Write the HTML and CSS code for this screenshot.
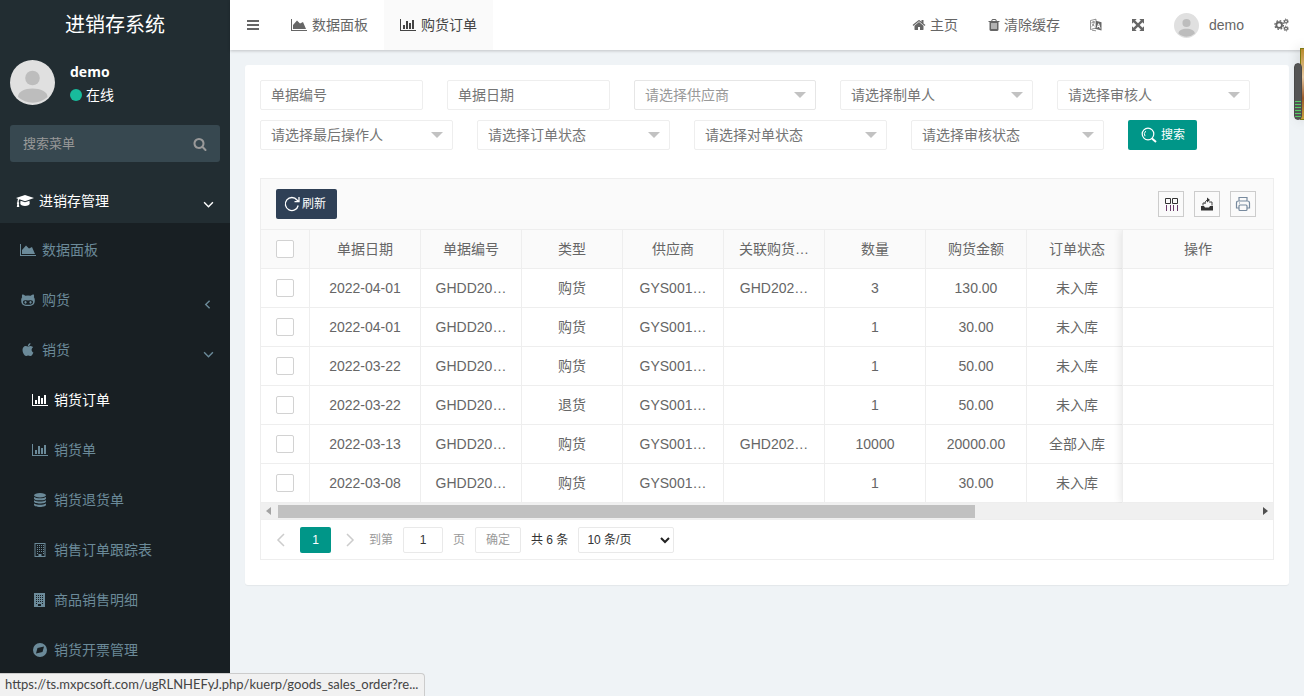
FILE: index.html
```html
<!DOCTYPE html>
<html lang="zh-CN">
<head>
  <meta charset="UTF-8">
  <meta name="viewport" content="width=device-width, initial-scale=1.0">
  <title>进销存系统</title>
  <link rel="stylesheet" href="styles.css">
</head>
<body>
  <!-- Icon sprite -->
  <svg class="sprite" aria-hidden="true">
    <symbol id="i-bars" viewBox="0 0 14 14"><path d="M1 2h12v2H1zM1 6h12v2H1zM1 10h12v2H1z"/></symbol>
    <symbol id="i-area" viewBox="0 0 16 14"><path d="M0 1h1v11h15v1H0zM2 11V7l4-4.500 3 3 3-1.500 3 7z"/></symbol>
    <symbol id="i-bar" viewBox="0 0 16 14"><path d="M0 1h1v11h15v1H0zM3 7h2v4H3zM6 3h2v8H6zM9 5h2v6H9zM12 2h2v9h-2z"/></symbol>
    <symbol id="i-home" viewBox="0 0 1792 1792"><path d="M1472 992v480q0 26-19 45t-45 19h-384v-384h-256v384h-384q-26 0-45-19t-19-45v-480q0-1 .5-3t.5-3l575-474 575 474q1 2 1 6zm223-69l-62 74q-8 9-21 11h-3q-13 0-21-7l-692-577-692 577q-12 8-24 7-13-2-21-11l-62-74q-8-10-7-23.500t11-21.500l719-599q32-26 76-26t76 26l244 204v-195q0-14 9-23t23-9h192q14 0 23 9t9 23v408l219 182q10 8 11 21.500t-7 23.500z"/></symbol>
    <symbol id="i-trash" viewBox="192 0 1408 1792"><path d="M704 1376v-704q0-14-9-23t-23-9h-64q-14 0-23 9t-9 23v704q0 14 9 23t23 9h64q14 0 23-9t9-23zm256 0v-704q0-14-9-23t-23-9h-64q-14 0-23 9t-9 23v704q0 14 9 23t23 9h64q14 0 23-9t9-23zm256 0v-704q0-14-9-23t-23-9h-64q-14 0-23 9t-9 23v704q0 14 9 23t23 9h64q14 0 23-9t9-23zm-544-992h448l-48-117q-7-9-17-11h-317q-10 2-17 11zm928 32v64q0 14-9 23t-23 9h-96v948q0 83-47 143.500t-113 60.500h-832q-66 0-113-58.500t-47-141.500v-952h-96q-14 0-23-9t-9-23v-64q0-14 9-23t23-9h309l70-167q15-37 54-63t79-26h320q40 0 79 26t54 63l70 167h309q14 0 23 9t9 23z"/></symbol>
    <symbol id="i-search" viewBox="0 0 1792 1792"><path d="M1216 832q0-185-131.500-316.500t-316.500-131.500-316.500 131.500-131.500 316.500 131.500 316.500 316.500 131.500 316.500-131.500 131.500-316.500zm512 832q0 52-38 90t-90 38q-54 0-90-38l-343-342q-179 124-399 124-143 0-273.500-55.500t-225-150-150-225-55.500-273.500 55.500-273.500 150-225 225-150 273.500-55.500 273.500 55.500 225 150 150 225 55.500 273.500q0 220-124 399l343 343q37 37 37 90z"/></symbol>
    <symbol id="i-apple" viewBox="0 0 1792 1792"><path d="M1585 1215q-39 125-123 250-129 196-257 196-49 0-140-32-86-32-151-32-61 0-142 33-81 34-132 34-152 0-301-259-147-261-147-503 0-228 113-374 113-144 284-144 72 0 177 30 104 30 138 30 45 0 143-34 102-34 173-34 119 0 213 65 52 36 104 100-79 67-114 118-65 94-65 207 0 124 69 223t158 126zm-376-1173q0 61-29 136-30 75-93 138-54 54-108 72-37 11-104 17 3-149 78-257 74-107 250-148 1 3 2.500 11t2.500 11q0 4 .5 10t.5 10z"/></symbol>
    <symbol id="i-github" viewBox="0 0 14 14"><path fill-rule="evenodd" d="M1.200 1.500c1 0 2.300.5 3.100 1.200a13 13 0 0 1 5.400 0c.8-.7 2.100-1.200 3.100-1.200.4 1 .4 2 .1 2.800.8 1 .9 2 .9 3.200 0 4-2 5.500-6.800 5.500S.2 11.500.2 7.500c0-1.200.1-2.200.9-3.200-.3-.8-.3-1.800.1-2.800zM4 7.300C2.600 7.300 2 8 2 9.200c0 2 1.700 2.600 5 2.600s5-.6 5-2.600c0-1.200-.6-1.900-2-1.900-1 0-1.800.2-3 .2s-2-.2-3-.2z"/><ellipse cx="4.500" cy="9.300" rx="1" ry="1.400"/><ellipse cx="9.500" cy="9.300" rx="1" ry="1.400"/></symbol>
    <symbol id="i-cap" viewBox="0 0 18 14"><path d="M9 1l9 3-9 3.200L3.500 5.300C2.800 6 2.700 7 2.700 8.200c.7.500.7 1.200.1 1.700l.5 3.100H.8l.5-3.100c-.6-.5-.6-1.200.1-1.700 0-1.400.2-2.600.8-3.300L0 4zM4.500 6.700L9 8.300l4.500-1.600.2 3c0 1.100-2 2.300-4.700 2.300s-4.700-1.200-4.700-2.300z"/></symbol>
    <symbol id="i-db" viewBox="0 0 14 14"><ellipse cx="7" cy="2.200" rx="6" ry="2.200"/><path d="M1 4c2.500 1.800 9.500 1.800 12 0v1.400c0 2.600-12 2.600-12 0zM1 7.200c2.500 1.800 9.500 1.800 12 0v1.400c0 2.600-12 2.600-12 0zM1 10.400c2.500 1.800 9.500 1.800 12 0v1.400c0 2.900-12 2.900-12 0z"/></symbol>
    <symbol id="i-building-o" viewBox="0 0 14 14"><path fill-rule="evenodd" d="M1.500 0h11v14h-11zM2.500 1v12h3v-2h3v2h3V1z"/><path d="M4 2h1v1H4zM6 2h1v1H6zM8 2h1v1H8zM10 2h1v1h-1zM4 4h1v1H4zM6 4h1v1H6zM8 4h1v1H8zM10 4h1v1h-1zM4 6h1v1H4zM6 6h1v1H6zM8 6h1v1H8zM10 6h1v1h-1zM4 8h1v1H4zM6 8h1v1H6zM8 8h1v1H8zM10 8h1v1h-1zM4 10h1v1H4zM10 10h1v1h-1z"/></symbol>
    <symbol id="i-building" viewBox="0 0 14 14"><path fill-rule="evenodd" d="M1 0h11v14H1zM3 2v1h1V2zM5 2v1h1V2zM7 2v1h1V2zM9 2v1h1V2zM3 4v1h1V4zM5 4v1h1V4zM7 4v1h1V4zM9 4v1h1V4zM3 6v1h1V6zM5 6v1h1V6zM7 6v1h1V6zM9 6v1h1V6zM3 8v1h1V8zM5 8v1h1V8zM7 8v1h1V8zM9 8v1h1V8zM3 10v1h1v-1zM9 10v1h1v-1zM5 11v2h3v-2z"/></symbol>
    <symbol id="i-compass" viewBox="0 0 14 14"><path fill-rule="evenodd" d="M7 0a7 7 0 1 0 0 14A7 7 0 0 0 7 0zM11 3.500L9.500 9 3 10.500 4.500 5z"/></symbol>
    <symbol id="i-down" viewBox="0 0 10 10"><path d="M1 3l4 4 4-4" fill="none" stroke="currentColor" stroke-width="1.300"/></symbol>
    <symbol id="i-left" viewBox="0 0 10 10"><path d="M6 1.500L2.500 5 6 8.500" fill="none" stroke="currentColor" stroke-width="1.300"/></symbol>
    <symbol id="i-lang" viewBox="1 1 12 12"><path d="M6 2.500l6.500 1.700v8.300L6 10.700z"/><path d="M1.500 2.500L7 1.200v8.800l-5.500 1.500z" fill="#fff" stroke="currentColor" stroke-width=".7"/><path d="M2.500 4.500L6 3.700M4.200 3v1.400M5.200 4C5 6 4 7.800 2.500 8.800M3 5.500c.6 1.300 1.500 2 2.500 2.600M3 12.200l4 .6" fill="none" stroke="currentColor" stroke-width=".7"/><path d="M8.200 9.700l1.400-4 1.600 4.800M8.800 8.300l1.800.5" fill="none" stroke="#fff"/></symbol>
    <symbol id="i-expand" viewBox="1 1 12 12"><path d="M1 1h4.700L4.200 2.500 7 5.300l2.800-2.800L8.300 1H13v4.700l-1.500-1.500L8.700 7l2.800 2.800L13 8.300V13H8.300l1.500-1.500L7 8.700l-2.800 2.800L5.700 13H1V8.300l1.500 1.500L5.300 7 2.500 4.200 1 5.700z"/></symbol>
    <symbol id="i-cogs" viewBox="0 0 16 14"><g fill="none" stroke="currentColor"><circle cx="5.500" cy="7" r="3" stroke-width="2"/><circle cx="5.500" cy="7" r="4.600" stroke-width="1.300" stroke-dasharray="1.800 1.813"/><circle cx="12.800" cy="3.200" r="1.600" stroke-width="1.300"/><circle cx="12.800" cy="3.200" r="2.600" stroke-dasharray="1.100 1.620"/><circle cx="12.800" cy="10.800" r="1.600" stroke-width="1.300"/><circle cx="12.800" cy="10.800" r="2.600" stroke-dasharray="1.100 1.620"/></g></symbol>
    <symbol id="i-avatar" viewBox="0 0 45 45"><circle cx="22.500" cy="22.500" r="22.500" fill="#e0e0e0"/><circle cx="22.500" cy="18" r="7.300" fill="#bdbdbd"/><path d="M8 37c0-5.500 6.500-8.500 14.500-8.500S37.500 31.500 37.500 37a22 22 0 0 1-29.500 0z" fill="#bdbdbd"/></symbol>
    <symbol id="i-refresh" viewBox="0 0 16 16"><path d="M14.200 9.500A6.500 6.500 0 1 1 13 4l1.500 1.500M15 1v4.700h-4.500" fill="none" stroke="currentColor" stroke-width="1.300"/></symbol>
    <symbol id="i-find" viewBox="0 0 16 16"><g fill="none" stroke="currentColor"><circle cx="7" cy="7" r="5.800" stroke-width="1.200"/><path d="M4 9.200a4 4 0 0 1 .7-5" /><path d="M11 11.500l4 3.500" stroke-width="2"/></g></symbol>
    <symbol id="i-cols" viewBox="0 0 16 16"><path d="M2.500 2.500h5v5h-5zM9.500 2.500h5v5h-5z" fill="none" stroke="#333"/><path d="M3 9h1v6H3zM7 9h1v6H7zM10 9h1v6h-1zM14 9h1v6h-1z" fill="#6b3a6b"/></symbol>
    <symbol id="i-export" viewBox="0 0 16 16"><path d="M2 10h3l1 1.500h4L11 10h3v4.500H2z" fill="#333"/><path d="M4 9.500V7h2M13 9.500V6h-3M6 8c.2-3 1.500-4 3-4" fill="none" stroke="#444"/><path d="M8 1.500L11 4 8 6.500z" fill="#333"/></symbol>
    <symbol id="i-print" viewBox="0 0 16 16"><g fill="none" stroke="#778a9e" stroke-width="1.200"><path d="M4 5V1.500h8V5M4 12H1.500V7c0-1.300.7-2 2-2h9c1.300 0 2 .7 2 2v5H12"/><rect x="4" y="9" width="8" height="5.500" rx="1"/><path d="M4 7h1"/></g></symbol>
    <symbol id="i-prev" viewBox="0 0 12 14"><path d="M9 1L3 7l6 6" fill="none" stroke="currentColor" stroke-width="1.500"/></symbol>
    <symbol id="i-next" viewBox="0 0 12 14"><path d="M3 1l6 6-6 6" fill="none" stroke="currentColor" stroke-width="1.500"/></symbol>
    <symbol id="i-check-down" viewBox="0 0 10 10"><path d="M1 3l4 4 4-4" fill="none" stroke="#222" stroke-width="2"/></symbol>
  </svg>

  <div class="wrapper">
    <!-- Sidebar -->
    <aside class="sidebar">
      <a class="logo" href="#">进销存系统</a>
      <div class="user-panel">
        <svg class="avatar"><use href="#i-avatar"/></svg>
        <div class="info">
          <p class="name">demo</p>
          <a class="status" href="#"><span class="dot"></span>在线</a>
        </div>
      </div>
      <form class="menu-search">
        <input type="text" placeholder="搜索菜单" aria-label="搜索菜单">
        <button type="button" aria-label="搜索"><svg class="icon"><use href="#i-search"/></svg></button>
      </form>
      <nav class="menu">
        <a class="root" href="#"><svg class="icon"><use href="#i-cap"/></svg>进销存管理<svg class="arrow"><use href="#i-down"/></svg></a>
        <div class="submenu">
          <a href="#"><svg class="icon"><use href="#i-area"/></svg>数据面板</a>
          <a href="#"><svg class="icon"><use href="#i-github"/></svg>购货<svg class="arrow"><use href="#i-left"/></svg></a>
          <a href="#"><svg class="icon"><use href="#i-apple"/></svg>销货<svg class="arrow"><use href="#i-down"/></svg></a>
          <a class="leaf active" href="#"><svg class="icon"><use href="#i-bar"/></svg>销货订单</a>
          <a class="leaf" href="#"><svg class="icon"><use href="#i-bar"/></svg>销货单</a>
          <a class="leaf" href="#"><svg class="icon"><use href="#i-db"/></svg>销货退货单</a>
          <a class="leaf" href="#"><svg class="icon"><use href="#i-building-o"/></svg>销售订单跟踪表</a>
          <a class="leaf" href="#"><svg class="icon"><use href="#i-building"/></svg>商品销售明细</a>
          <a class="leaf" href="#"><svg class="icon"><use href="#i-compass"/></svg>销货开票管理</a>
        </div>
      </nav>
    </aside>

    <div class="main">
      <!-- Top bar -->
      <header class="topbar">
        <a class="toggle" href="#" aria-label="菜单"><svg class="icon"><use href="#i-bars"/></svg></a>
        <a class="tab" href="#"><svg class="icon wide"><use href="#i-area"/></svg>数据面板</a>
        <a class="tab current" href="#"><svg class="icon wide"><use href="#i-bar"/></svg>购货订单</a>
        <div class="topbar-right">
          <a href="#"><svg class="icon"><use href="#i-home"/></svg>主页</a>
          <a href="#"><svg class="icon narrow"><use href="#i-trash"/></svg>清除缓存</a>
          <a href="#" aria-label="语言"><svg class="icon narrow"><use href="#i-lang"/></svg></a>
          <a href="#" aria-label="全屏"><svg class="icon narrow"><use href="#i-expand"/></svg></a>
          <a class="user" href="#"><svg class="avatar"><use href="#i-avatar"/></svg>demo</a>
          <a href="#" aria-label="设置"><svg class="icon cogs"><use href="#i-cogs"/></svg></a>
        </div>
      </header>

      <main class="content">
        <section class="panel">
          <!-- Filters -->
          <form class="filters">
            <input class="field" type="text" placeholder="单据编号" aria-label="单据编号">
            <input class="field" type="text" placeholder="单据日期" aria-label="单据日期">
            <div class="select supplier"><select aria-label="供应商"><option>请选择供应商</option></select></div>
            <div class="select"><select aria-label="制单人"><option>请选择制单人</option></select></div>
            <div class="select"><select aria-label="审核人"><option>请选择审核人</option></select></div>
            <div class="select"><select aria-label="最后操作人"><option>请选择最后操作人</option></select></div>
            <div class="select"><select aria-label="订单状态"><option>请选择订单状态</option></select></div>
            <div class="select"><select aria-label="对单状态"><option>请选择对单状态</option></select></div>
            <div class="select"><select aria-label="审核状态"><option>请选择审核状态</option></select></div>
            <button class="btn btn-search" type="button"><svg><use href="#i-find"/></svg>搜索</button>
          </form>

          <div class="grid-box">
            <div class="toolbar">
              <button class="btn btn-refresh" type="button"><svg><use href="#i-refresh"/></svg>刷新</button>
              <div class="tools">
                <button type="button" aria-label="筛选列"><svg><use href="#i-cols"/></svg></button>
                <button type="button" aria-label="导出"><svg><use href="#i-export"/></svg></button>
                <button type="button" aria-label="打印"><svg><use href="#i-print"/></svg></button>
              </div>
            </div>

            <div class="table-view">
              <table class="data">
                <colgroup><col class="c-check"><col class="c-date"><col><col><col><col><col><col><col><col><col><col></colgroup>
                <thead>
                  <tr><th><input type="checkbox" aria-label="全选"></th><th>单据日期</th><th>单据编号</th><th>类型</th><th>供应商</th><th>关联购货…</th><th>数量</th><th>购货金额</th><th>订单状态</th><th></th><th></th><th></th></tr>
                </thead>
                <tbody>
                  <tr><td><input type="checkbox" aria-label="选择"></td><td>2022-04-01</td><td>GHDD20…</td><td>购货</td><td>GYS001…</td><td>GHD202…</td><td>3</td><td>130.00</td><td>未入库</td><td></td><td></td><td></td></tr>
                  <tr><td><input type="checkbox" aria-label="选择"></td><td>2022-04-01</td><td>GHDD20…</td><td>购货</td><td>GYS001…</td><td></td><td>1</td><td>30.00</td><td>未入库</td><td></td><td></td><td></td></tr>
                  <tr><td><input type="checkbox" aria-label="选择"></td><td>2022-03-22</td><td>GHDD20…</td><td>购货</td><td>GYS001…</td><td></td><td>1</td><td>50.00</td><td>未入库</td><td></td><td></td><td></td></tr>
                  <tr><td><input type="checkbox" aria-label="选择"></td><td>2022-03-22</td><td>GHDD20…</td><td>退货</td><td>GYS001…</td><td></td><td>1</td><td>50.00</td><td>未入库</td><td></td><td></td><td></td></tr>
                  <tr><td><input type="checkbox" aria-label="选择"></td><td>2022-03-13</td><td>GHDD20…</td><td>购货</td><td>GYS001…</td><td>GHD202…</td><td>10000</td><td>20000.00</td><td>全部入库</td><td></td><td></td><td></td></tr>
                  <tr><td><input type="checkbox" aria-label="选择"></td><td>2022-03-08</td><td>GHDD20…</td><td>购货</td><td>GYS001…</td><td></td><td>1</td><td>30.00</td><td>未入库</td><td></td><td></td><td></td></tr>
                </tbody>
              </table>
              <!-- Pinned action column -->
              <table class="pinned">
                <thead><tr><th>操作</th></tr></thead>
                <tbody>
                  <tr><td></td></tr>
                  <tr><td></td></tr>
                  <tr><td></td></tr>
                  <tr><td></td></tr>
                  <tr><td></td></tr>
                  <tr><td></td></tr>
                </tbody>
              </table>
            </div>
            <div class="scrollbar"><span class="sb-left"></span><div class="track"><div class="thumb"></div></div><span class="sb-right"></span></div>

            <div class="pager">
              <button class="step" type="button" aria-label="上一页"><svg><use href="#i-prev"/></svg></button>
              <button class="page" type="button">1</button>
              <button class="step" type="button" aria-label="下一页"><svg><use href="#i-next"/></svg></button>
              <div class="pager-jump">
                <label for="page">到第</label>
                <input id="page" type="text" value="1">
                <span>页</span>
                <button type="button">确定</button>
                <span class="total">共 6 条</span>
                <div class="limit"><select aria-label="每页条数"><option>10 条/页</option></select><svg><use href="#i-check-down"/></svg></div>
              </div>
            </div>
          </div>
        </section>
      </main>
    </div>
  </div>

  <div class="dock-edge"></div>
  <div class="dock-meter"></div>
  <div class="status-bar">https://ts.mxpcsoft.com/ugRLNHEFyJ.php/kuerp/goods_sales_order?re...</div>
</body>
</html>
```
FILE: styles.css
```css
* {
  box-sizing: border-box;
}
body {
  margin: 0;
  font-family: "Liberation Sans", "Noto Sans CJK SC", sans-serif;
  font-size: 14px;
  line-height: 20px;
  color: #666;
  background-color: #eff3f6;
  overflow: hidden;
}
a {
  color: inherit;
  text-decoration: none;
}
button, input, select {
  font: inherit;
  margin: 0;
}
button {
  cursor: pointer;
}
svg {
  fill: currentColor;
  flex: none;
}
.sprite {
  display: none;
}
.icon {
  width: 14px;
  height: 14px;
}
.icon.wide {
  width: 16px;
}
.icon.narrow {
  width: 12px;
}
.icon.cogs {
  width: 15px;
}
.wrapper {
  display: flex;
  min-height: 100vh;
}

/* Sidebar */
.sidebar {
  width: 230px;
  flex: none;
  background-color: #222d32;
  color: #fff;
}
.logo {
  display: block;
  height: 50px;
  line-height: 50px;
  font-size: 20px;
  text-align: center;
}
.user-panel {
  display: flex;
  gap: 15px;
  padding: 10px;
}
.user-panel .avatar {
  width: 45px;
  height: 45px;
}
.name {
  margin: 2px 0 3px;
  font-family: "Open Sans", sans-serif;
  font-weight: bold;
}
.status {
  display: flex;
  align-items: center;
  gap: 4px;
}
.dot {
  width: 12px;
  height: 12px;
  border-radius: 50%;
  background-color: #18bc9c;
}
.menu-search {
  display: flex;
  height: 37px;
  margin: 10px 10px 16px;
  background-color: #374850;
  border-radius: 3px;
}
.menu-search input {
  flex: 1;
  min-width: 0;
  padding: 0 13px;
  border: 0;
  background: none;
  color: #fff;
  font-size: 13px;
}
.menu-search input::placeholder {
  color: #999;
}
.menu-search button {
  display: flex;
  align-items: center;
  padding: 0 13px;
  border: 0;
  background: none;
  color: #999;
}
.menu a {
  display: flex;
  align-items: center;
  gap: 4px;
  height: 50px;
  padding: 0 16px 0 18px;
}
.menu .root {
  height: 45px;
  padding-left: 15px;
}
.menu .leaf {
  padding-left: 30px;
}
.menu .icon {
  width: 20px;
}
.menu .arrow {
  width: 11px;
  height: 11px;
  margin-left: auto;
  margin-top: 8px;
}
.submenu {
  padding: 2px 0 21px;
  background-color: #181f23;
  color: #6b8a99;
}
.submenu .active {
  color: #fff;
}

/* Top bar */
.main {
  flex: 1;
  min-width: 0;
}
.topbar {
  display: flex;
  position: relative;
  height: 50px;
  background-color: #fff;
  box-shadow: 0 1px 3px rgba(0, 0, 0, 0.2);
}
.topbar a {
  display: flex;
  align-items: center;
  gap: 4px;
  padding: 0 15px;
}
.topbar .toggle {
  padding-left: 16px;
}
.topbar .tab {
  gap: 5px;
  padding: 0 16px;
}
.topbar .current {
  background-color: #fafafa;
  color: #444;
}
.topbar-right {
  display: flex;
  margin-left: auto;
}
.topbar .user {
  gap: 10px;
}
.topbar .avatar {
  width: 25px;
  height: 25px;
}

/* Content */
.content {
  padding: 15px;
}
.panel {
  padding: 15px 15px 25px;
  background-color: #fff;
  border-radius: 3px;
  box-shadow: 0 1px 1px rgba(0, 0, 0, 0.05);
}
.filters {
  display: flex;
  flex-wrap: wrap;
  gap: 10px 24px;
  margin-bottom: 28px;
}
.field, .select select {
  height: 30px;
  padding: 0 10px;
  border: 1px solid #eee;
  border-radius: 2px;
  background-color: #fff;
  color: #757575;
}
.field {
  width: 163px;
}
.select {
  position: relative;
  width: 193px;
}
.select select {
  width: 100%;
  appearance: none;
}
.select::after {
  content: '';
  position: absolute;
  top: 12px;
  right: 10px;
  border: 6px solid transparent;
  border-top-color: #c2c2c2;
  border-bottom: 0;
  pointer-events: none;
}
.select.supplier {
  width: 182px;
}
.supplier select {
  border-color: #e6e6e6;
  color: #999;
}
.btn {
  display: flex;
  align-items: center;
  height: 30px;
  border: 0;
  border-radius: 2px;
  color: #fff;
  font-size: 12px;
}
.btn svg {
  width: 16px;
  height: 16px;
}
.btn-search {
  gap: 4px;
  padding: 0 12px 0 13px;
  background-color: #009688;
}
.btn-refresh {
  gap: 2px;
  padding: 0 11px 0 8px;
  background-color: #2f4056;
}

/* Table */
.grid-box {
  border: 1px solid #eee;
}
.toolbar {
  display: flex;
  justify-content: space-between;
  align-items: center;
  padding: 10px 17px 10px 15px;
  background-color: #fafafa;
  border-bottom: 1px solid #eee;
}
.tools {
  display: flex;
  gap: 10px;
}
.tools button {
  display: flex;
  align-items: center;
  justify-content: center;
  width: 26px;
  height: 26px;
  padding: 0;
  border: 1px solid #ccc;
  background: none;
}
.tools svg {
  width: 16px;
  height: 16px;
}
.table-view {
  position: relative;
  overflow: hidden;
}
table {
  table-layout: fixed;
  border-collapse: separate;
  border-spacing: 0;
}
.data {
  width: 1170px;
}
.data col {
  width: 101px;
}
.data .c-check {
  width: 49px;
}
.data .c-date {
  width: 111px;
}
th, td {
  height: 39px;
  padding: 0;
  border-right: 1px solid #eee;
  border-bottom: 1px solid #eee;
  font-weight: normal;
  text-align: center;
  white-space: nowrap;
}
th {
  background-color: #fafafa;
}
table input {
  display: block;
  appearance: none;
  width: 18px;
  height: 18px;
  margin: 0 auto;
  border: 1px solid #d2d2d2;
  border-radius: 2px;
  background-color: #fff;
}
.pinned {
  position: absolute;
  top: 0;
  right: 0;
  width: 151px;
  background-color: #fff;
  border-left: 1px solid #eee;
  box-shadow: -1px 0 8px rgba(0, 0, 0, 0.1);
}
.pinned th, .pinned td {
  border-right: 0;
}
.scrollbar {
  display: flex;
  align-items: center;
  height: 17px;
  padding: 0 5px;
  background-color: #f0f0f0;
  border-bottom: 1px solid #eee;
}
.sb-left, .sb-right {
  border: 4px solid transparent;
}
.sb-left {
  border-left: 0;
  border-right: 5px solid #a3a3a3;
}
.sb-right {
  border-right: 0;
  border-left: 5px solid #505050;
}
.track {
  flex: 1;
  margin: 0 7px;
}
.thumb {
  width: 71.3%;
  height: 13px;
  background-color: #c1c1c1;
}

/* Pagination */
.pager {
  display: flex;
  align-items: center;
  height: 39px;
  padding: 0 1px;
  font-size: 12px;
  color: #999;
}
.pager button, .pager input, .pager select {
  height: 26px;
  padding: 0;
  border: 1px solid #e9e9e9;
  border-radius: 2px;
  background-color: #fff;
  color: #333;
  text-align: center;
}
.pager .step {
  display: flex;
  align-items: center;
  justify-content: center;
  width: 38px;
  border: 0;
  color: #ccc;
}
.pager .step svg {
  width: 12px;
  height: 14px;
}
.pager .page {
  width: 31px;
  border: 0;
  background-color: #009688;
  color: #fff;
}
.pager-jump {
  display: flex;
  align-items: center;
  gap: 10px;
}
.pager-jump input {
  width: 40px;
}
.pager-jump button {
  width: 46px;
  color: #999;
}
.total {
  color: #333;
}
.limit {
  position: relative;
}
.pager .limit select {
  width: 96px;
  padding: 0 8px;
  text-align: left;
  appearance: none;
}
.limit svg {
  position: absolute;
  top: 8px;
  right: 4px;
  width: 10px;
  height: 10px;
  pointer-events: none;
}

/* Floating dock on the right edge */
.dock-edge {
  position: fixed;
  top: 48px;
  right: 0;
  width: 4px;
  height: 72px;
  border: 1px solid #7d7a14;
  border-right: 0;
  background: linear-gradient(#b98a2c, #e8c9a0 40%, #9a5a2a 70%, #c9a23a);
  box-shadow: 0 0 12px rgba(0, 0, 0, 0.25);
}
.dock-meter {
  position: fixed;
  top: 63px;
  right: 2px;
  width: 8px;
  height: 57px;
  border: 1px solid #4a4a4a;
  border-radius: 4px;
  background: linear-gradient(#555 36px, transparent 36px), repeating-linear-gradient(#555 0 1px, #5c6 1px 2px, #555 2px 3px);
}

/* Browser link hint */
.status-bar {
  position: fixed;
  left: 0;
  bottom: 0;
  height: 23px;
  padding: 0 6px 0 5px;
  border: 1px solid #ccc;
  border-width: 1px 1px 0 0;
  border-top-right-radius: 4px;
  background-color: #f1f1f1;
  color: #444;
  font-family: Lato, sans-serif;
  font-size: 13px;
  line-height: 21px;
}
```
